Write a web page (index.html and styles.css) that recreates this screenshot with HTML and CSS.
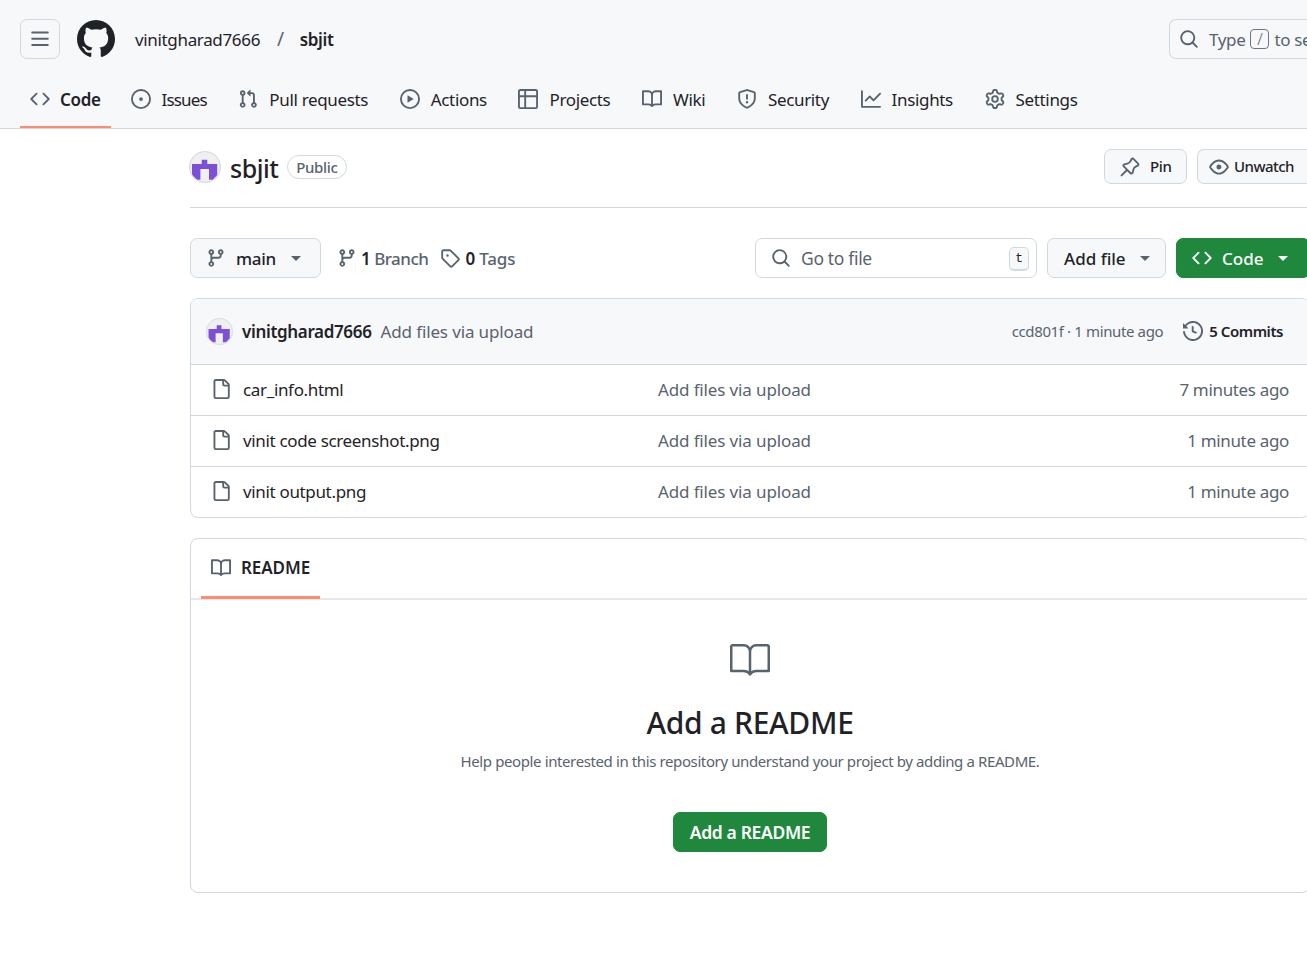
FILE: index.html
```html
<!DOCTYPE html>
<html lang="en">
<head>
    <meta charset="UTF-8">
    <meta name="viewport" content="width=device-width, initial-scale=1.0">
    <title>vinitgharad7666/sbjit</title>
    <link rel="stylesheet" href="styles.css">
</head>
<body>
    <!-- Iconos reutilizados -->
    <svg class="sprites" xmlns="http://www.w3.org/2000/svg">
        <symbol id="i-bars" viewBox="0 0 16 16"><path d="M1 2.75A.75.75 0 0 1 1.75 2h12.5a.75.75 0 0 1 0 1.5H1.75A.75.75 0 0 1 1 2.75Zm0 5A.75.75 0 0 1 1.75 7h12.5a.75.75 0 0 1 0 1.5H1.75A.75.75 0 0 1 1 7.75ZM1.75 12h12.5a.75.75 0 0 1 0 1.5H1.75a.75.75 0 0 1 0-1.5Z"/></symbol>
        <symbol id="i-mark" viewBox="0 0 16 16"><path d="M8 0c4.42 0 8 3.58 8 8a8.013 8.013 0 0 1-5.45 7.59c-.4.08-.55-.17-.55-.38 0-.27.01-1.13.01-2.2 0-.75-.25-1.23-.54-1.48 1.78-.2 3.65-.88 3.65-3.95 0-.88-.31-1.59-.82-2.15.08-.2.36-1.02-.08-2.12 0 0-.67-.22-2.2.82-.64-.18-1.32-.27-2-.27-.68 0-1.36.09-2 .27-1.53-1.03-2.2-.82-2.2-.82-.44 1.1-.16 1.92-.08 2.12-.51.56-.82 1.28-.82 2.15 0 3.06 1.86 3.75 3.64 3.95-.23.2-.44.55-.51 1.07-.46.21-1.61.55-2.33-.66-.15-.24-.6-.83-1.23-.82-.67.01-.27.38.01.53.34.19.73.9.82 1.13.16.45.68 1.31 2.69.94 0 .67.01 1.3.01 1.49 0 .21-.15.45-.55.38A7.995 7.995 0 0 1 0 8c0-4.42 3.58-8 8-8Z"/></symbol>
        <symbol id="i-code" viewBox="0 0 16 16"><path d="m11.28 3.22 4.25 4.25a.75.75 0 0 1 0 1.06l-4.25 4.25a.749.749 0 0 1-1.275-.326.749.749 0 0 1 .215-.734L13.94 8l-3.72-3.72a.749.749 0 0 1 .326-1.275.749.749 0 0 1 .734.215Zm-6.56 0a.751.751 0 0 1 1.042.018.751.751 0 0 1 .018 1.042L2.06 8l3.72 3.72a.749.749 0 0 1-.326 1.275.749.749 0 0 1-.734-.215L.47 8.53a.75.75 0 0 1 0-1.06Z"/></symbol>
        <symbol id="i-issue" viewBox="0 0 16 16"><path d="M8 9.5a1.5 1.5 0 1 0 0-3 1.5 1.5 0 0 0 0 3Z"/><path d="M8 0a8 8 0 1 1 0 16A8 8 0 0 1 8 0ZM1.5 8a6.5 6.5 0 1 0 13 0 6.5 6.5 0 0 0-13 0Z"/></symbol>
        <symbol id="i-pull" viewBox="0 0 16 16"><path d="M1.5 3.25a2.25 2.25 0 1 1 3 2.122v5.256a2.251 2.251 0 1 1-1.5 0V5.372A2.25 2.25 0 0 1 1.5 3.25Zm5.677-.177L9.573.677A.25.25 0 0 1 10 .854V2.5h1A2.5 2.5 0 0 1 13.5 5v5.628a2.251 2.251 0 1 1-1.5 0V5a1 1 0 0 0-1-1h-1v1.646a.25.25 0 0 1-.427.177L7.177 3.427a.25.25 0 0 1 0-.354ZM3.75 2.5a.75.75 0 1 0 0 1.5.75.75 0 0 0 0-1.5Zm0 9.5a.75.75 0 1 0 0 1.5.75.75 0 0 0 0-1.5Zm8.25.75a.75.75 0 1 0 1.5 0 .75.75 0 0 0-1.5 0Z"/></symbol>
        <symbol id="i-play" viewBox="0 0 16 16"><path d="M8 0a8 8 0 1 1 0 16A8 8 0 0 1 8 0ZM1.5 8a6.5 6.5 0 1 0 13 0 6.5 6.5 0 0 0-13 0Zm4.879-2.773 4.264 2.559a.25.25 0 0 1 0 .428l-4.264 2.559A.25.25 0 0 1 6 10.559V5.442a.25.25 0 0 1 .379-.215Z"/></symbol>
        <symbol id="i-table" viewBox="0 0 16 16"><path d="M0 1.75C0 .784.784 0 1.75 0h12.5C15.216 0 16 .784 16 1.75v12.5A1.75 1.75 0 0 1 14.25 16H1.75A1.75 1.75 0 0 1 0 14.25ZM6.5 6.5v8h7.75a.25.25 0 0 0 .25-.25V6.5Zm8-1.5V1.75a.25.25 0 0 0-.25-.25H6.5V5Zm-13 1.5v7.75c0 .138.112.25.25.25H5v-8ZM5 5V1.5H1.75a.25.25 0 0 0-.25.25V5Z"/></symbol>
        <symbol id="i-book" viewBox="0 0 16 16"><path d="M0 1.75A.75.75 0 0 1 .75 1h4.253c1.227 0 2.317.59 3 1.501A3.743 3.743 0 0 1 11.006 1h4.245a.75.75 0 0 1 .75.75v10.5a.75.75 0 0 1-.75.75h-4.507a2.25 2.25 0 0 0-1.591.659l-.622.621a.75.75 0 0 1-1.06 0l-.622-.621A2.25 2.25 0 0 0 5.258 13H.75a.75.75 0 0 1-.75-.75Zm7.251 10.324.004-5.073-.002-2.253A2.25 2.25 0 0 0 5.003 2.5H1.5v9h3.757a3.75 3.75 0 0 1 1.994.574ZM8.755 4.75l-.004 7.322a3.752 3.752 0 0 1 1.992-.572H14.5v-9h-3.495a2.25 2.25 0 0 0-2.25 2.25Z"/></symbol>
        <symbol id="i-book-big" viewBox="0 0 24 24"><path fill="none" stroke="#59636e" stroke-width="1.5" stroke-linejoin="round" d="M.75 3.75h7.5A3.75 3.75 0 0 1 12 7.5v13M23.25 3.75h-7.5A3.75 3.75 0 0 0 12 7.5M.75 3.75v15.5h7.5c1.5 0 3 .7 3.75 2 .75-1.3 2.25-2 3.75-2h7.5V3.75"/></symbol>
        <symbol id="i-shield" viewBox="0 0 16 16"><path d="M7.467.133a1.748 1.748 0 0 1 1.066 0l5.25 1.68A1.75 1.75 0 0 1 15 3.48V7c0 1.566-.32 3.182-1.303 4.682-.983 1.498-2.585 2.813-5.032 3.855a1.697 1.697 0 0 1-1.33 0c-2.447-1.042-4.049-2.357-5.032-3.855C1.32 10.182 1 8.566 1 7V3.48a1.75 1.75 0 0 1 1.217-1.667Zm.61 1.429a.25.25 0 0 0-.153 0l-5.25 1.68a.25.25 0 0 0-.174.238V7c0 1.358.275 2.666 1.057 3.86.784 1.194 2.121 2.34 4.366 3.297a.196.196 0 0 0 .154 0c2.245-.956 3.582-2.104 4.366-3.298C13.225 9.666 13.5 8.36 13.5 7V3.48a.251.251 0 0 0-.174-.237l-5.25-1.68ZM8.75 4.75v3a.75.75 0 0 1-1.5 0v-3a.75.75 0 0 1 1.5 0ZM9 10.5a1 1 0 1 1-2 0 1 1 0 0 1 2 0Z"/></symbol>
        <symbol id="i-graph" viewBox="0 0 16 16"><path d="M1.5 1.75V13.5h13.75a.75.75 0 0 1 0 1.5H.75a.75.75 0 0 1-.75-.75V1.75a.75.75 0 0 1 1.5 0Zm14.28 2.53-5.25 5.25a.75.75 0 0 1-1.06 0L7 7.06 4.28 9.78a.751.751 0 0 1-1.042-.018.751.751 0 0 1-.018-1.042l3.25-3.25a.75.75 0 0 1 1.06 0L10 7.94l4.72-4.72a.751.751 0 0 1 1.042.018.751.751 0 0 1 .018 1.042Z"/></symbol>
        <symbol id="i-gear" viewBox="0 0 16 16"><path d="M8 0a8.2 8.2 0 0 1 .701.031C9.444.095 9.99.645 10.16 1.29l.288 1.107c.018.066.079.158.212.224.231.114.454.243.668.386.123.082.233.09.299.071l1.103-.303c.644-.176 1.392.021 1.82.63.27.385.506.792.704 1.218.315.675.111 1.422-.364 1.891l-.814.806c-.049.048-.098.147-.088.294.016.257.016.515 0 .772-.01.147.038.246.088.294l.814.806c.475.469.679 1.216.364 1.891a7.977 7.977 0 0 1-.704 1.217c-.428.61-1.176.807-1.82.63l-1.102-.302c-.067-.019-.177-.011-.3.071a5.909 5.909 0 0 1-.668.386c-.133.066-.194.158-.211.224l-.29 1.106c-.168.646-.715 1.196-1.458 1.26a8.006 8.006 0 0 1-1.402 0c-.743-.064-1.289-.614-1.458-1.26l-.289-1.106c-.018-.066-.079-.158-.212-.224a5.738 5.738 0 0 1-.668-.386c-.123-.082-.233-.09-.299-.071l-1.103.303c-.644.176-1.392-.021-1.82-.63a8.12 8.12 0 0 1-.704-1.218c-.315-.675-.111-1.422.363-1.891l.815-.806c.05-.048.098-.147.088-.294a6.214 6.214 0 0 1 0-.772c.01-.147-.038-.246-.088-.294l-.815-.806C.635 6.045.431 5.298.746 4.623a7.92 7.92 0 0 1 .704-1.217c.428-.61 1.176-.807 1.82-.63l1.102.302c.067.019.177.011.3-.071.214-.143.437-.272.668-.386.133-.066.194-.158.211-.224l.29-1.106C6.009.645 6.556.095 7.299.03 7.53.01 7.764 0 8 0Zm-.571 1.525c-.036.003-.108.036-.137.146l-.289 1.105c-.147.561-.549.967-.998 1.189-.173.086-.34.183-.5.29-.417.278-.97.423-1.529.27l-1.103-.303c-.109-.03-.175.016-.195.045-.22.312-.412.644-.573.99-.014.031-.021.11.059.19l.815.806c.411.406.562.957.53 1.456a4.709 4.709 0 0 0 0 .582c.032.499-.119 1.05-.53 1.456l-.815.806c-.081.08-.073.159-.059.19.162.346.353.677.573.989.02.03.085.076.195.046l1.102-.303c.56-.153 1.113-.008 1.53.27.161.107.328.204.501.29.447.222.85.629.997 1.189l.289 1.105c.029.109.101.143.137.146a6.6 6.6 0 0 0 1.142 0c.036-.003.108-.036.137-.146l.289-1.105c.147-.561.549-.967.998-1.189.173-.086.34-.183.5-.29.417-.278.97-.423 1.529-.27l1.103.303c.109.029.175-.016.195-.045.22-.313.411-.644.573-.99.014-.031.021-.11-.059-.19l-.815-.806c-.411-.406-.562-.957-.53-1.456a4.709 4.709 0 0 0 0-.582c-.032-.499.119-1.05.53-1.456l.815-.806c.081-.08.073-.159.059-.19a6.464 6.464 0 0 0-.573-.989c-.02-.03-.085-.076-.195-.046l-1.102.303c-.56.153-1.113.008-1.53-.27a4.44 4.44 0 0 0-.501-.29c-.447-.222-.85-.629-.997-1.189l-.289-1.105c-.029-.11-.101-.143-.137-.146a6.6 6.6 0 0 0-1.142 0ZM11 8a3 3 0 1 1-6 0 3 3 0 0 1 6 0ZM9.5 8a1.5 1.5 0 1 0-3.001.001A1.5 1.5 0 0 0 9.5 8Z"/></symbol>
        <symbol id="i-search" viewBox="0 0 16 16"><path d="M10.68 11.74a6 6 0 0 1-7.922-8.982 6 6 0 0 1 8.982 7.922l3.04 3.04a.749.749 0 0 1-.326 1.275.749.749 0 0 1-.734-.215ZM11.5 7a4.499 4.499 0 1 0-8.997 0A4.499 4.499 0 0 0 11.5 7Z"/></symbol>
        <symbol id="i-pin" viewBox="0 0 16 16"><path d="m11.294.984 3.722 3.722a1.75 1.75 0 0 1-.504 2.826l-1.327.613a3.089 3.089 0 0 0-1.707 2.084l-.584 2.454c-.317 1.332-1.972 1.8-2.94.832L5.75 11.311 1.78 15.28a.749.749 0 1 1-1.06-1.06l3.969-3.97-2.204-2.204c-.968-.968-.5-2.623.832-2.94l2.454-.584a3.08 3.08 0 0 0 2.084-1.707l.613-1.327a1.75 1.75 0 0 1 2.826-.504ZM6.283 9.723l2.732 2.731a.25.25 0 0 0 .42-.119l.584-2.454a4.586 4.586 0 0 1 2.537-3.098l1.328-.613a.25.25 0 0 0 .072-.404l-3.722-3.722a.25.25 0 0 0-.404.072l-.613 1.328a4.584 4.584 0 0 1-3.098 2.537l-2.454.584a.25.25 0 0 0-.119.42l2.731 2.732Z"/></symbol>
        <symbol id="i-eye" viewBox="0 0 16 16"><path d="M8 2c1.981 0 3.671.992 4.933 2.078 1.27 1.091 2.187 2.345 2.637 3.023a1.62 1.62 0 0 1 0 1.798c-.45.678-1.367 1.932-2.637 3.023C11.67 13.008 9.981 14 8 14c-1.981 0-3.671-.992-4.933-2.078C1.797 10.83.88 9.576.43 8.898a1.62 1.62 0 0 1 0-1.798c.45-.677 1.367-1.931 2.637-3.022C4.33 2.992 6.019 2 8 2ZM1.679 7.932a.12.12 0 0 0 0 .136c.411.622 1.241 1.75 2.366 2.717C5.176 11.758 6.527 12.5 8 12.5c1.473 0 2.825-.742 3.955-1.715 1.124-.967 1.954-2.096 2.366-2.717a.12.12 0 0 0 0-.136c-.412-.621-1.242-1.75-2.366-2.717C10.824 4.242 9.473 3.5 8 3.5c-1.473 0-2.825.742-3.955 1.715-1.124.967-1.954 2.096-2.366 2.717ZM8 10a2 2 0 1 1-.001-3.999A2 2 0 0 1 8 10Z"/></symbol>
        <symbol id="i-branch" viewBox="0 0 16 16"><path d="M9.5 3.25a2.25 2.25 0 1 1 3 2.122V6A2.5 2.5 0 0 1 10 8.5H6a1 1 0 0 0-1 1v1.128a2.251 2.251 0 1 1-1.5 0V5.372a2.25 2.25 0 1 1 1.5 0v1.836A2.493 2.493 0 0 1 6 7h4a1 1 0 0 0 1-1v-.628A2.25 2.25 0 0 1 9.5 3.25Zm-6 0a.75.75 0 1 0 1.5 0 .75.75 0 0 0-1.5 0Zm8.25-.75a.75.75 0 1 0 0 1.5.75.75 0 0 0 0-1.5ZM4.25 12a.75.75 0 1 0 0 1.5.75.75 0 0 0 0-1.5Z"/></symbol>
        <symbol id="i-tag" viewBox="0 0 16 16"><path d="M1 7.775V2.75C1 1.784 1.784 1 2.75 1h5.025c.464 0 .91.184 1.238.513l6.25 6.25a1.75 1.75 0 0 1 0 2.474l-5.026 5.026a1.75 1.75 0 0 1-2.474 0l-6.25-6.25A1.752 1.752 0 0 1 1 7.775Zm1.5 0c0 .066.026.13.073.177l6.25 6.25a.25.25 0 0 0 .354 0l5.025-5.025a.25.25 0 0 0 0-.354l-6.25-6.25a.25.25 0 0 0-.177-.073H2.75a.25.25 0 0 0-.25.25ZM6 5a1 1 0 1 1 0 2 1 1 0 0 1 0-2Z"/></symbol>
        <symbol id="i-history" viewBox="0 0 16 16"><path d="m.427 1.927 1.215 1.215a8.002 8.002 0 1 1-1.6 5.685.75.75 0 1 1 1.493-.154 6.5 6.5 0 1 0 1.18-4.458l1.358 1.358A.25.25 0 0 1 3.896 6H.25A.25.25 0 0 1 0 5.75V2.104a.25.25 0 0 1 .427-.177ZM7.75 4a.75.75 0 0 1 .75.75v2.992l2.028.812a.75.75 0 0 1-.557 1.392l-2.5-1A.751.751 0 0 1 7 8.25v-3.5A.75.75 0 0 1 7.75 4Z"/></symbol>
        <symbol id="i-file" viewBox="0 0 16 16"><path d="M2 1.75C2 .784 2.784 0 3.75 0h6.586c.464 0 .909.184 1.237.513l2.914 2.914c.329.328.513.773.513 1.237v9.586A1.75 1.75 0 0 1 13.25 16h-9.5A1.75 1.75 0 0 1 2 14.25Zm1.75-.25a.25.25 0 0 0-.25.25v12.5c0 .138.112.25.25.25h9.5a.25.25 0 0 0 .25-.25V6h-2.75A1.75 1.75 0 0 1 9 4.25V1.5Zm6.75.062V4.25c0 .138.112.25.25.25h2.688l-.011-.013-2.914-2.914-.013-.011Z"/></symbol>
        <symbol id="i-avatar" viewBox="0 0 32 32"><circle cx="16" cy="16" r="16" fill="#f0f0f0"/><path fill="#7c50d6" d="M12.7 8.7h5.6V13h9.9v11l-4.4 4.7H20V18h-8.6v10.7H7.800L3 24V13h9.700Z"/><circle cx="16" cy="16" r="15.500" fill="none" stroke="#d1d9e0"/></symbol>
    </svg>

    <header class="top">
        <div class="top-row">
            <button class="menu-btn"><svg class="ic"><use href="#i-bars"/></svg></button>
            <svg class="logo"><use href="#i-mark"/></svg>
            <a class="owner">vinitgharad7666</a>
            <span class="slash">/</span>
            <a class="repo-link">sbjit</a>
            <div class="search">
                <svg class="ic"><use href="#i-search"/></svg>
                <span>Type</span><kbd class="slash-key">/</kbd><span>to search</span>
            </div>
        </div>
        <nav class="tabs">
            <a class="tab selected"><svg class="ic"><use href="#i-code"/></svg>Code</a>
            <a class="tab tab-issues"><svg class="ic"><use href="#i-issue"/></svg>Issues</a>
            <a class="tab"><svg class="ic"><use href="#i-pull"/></svg>Pull requests</a>
            <a class="tab"><svg class="ic"><use href="#i-play"/></svg>Actions</a>
            <a class="tab"><svg class="ic"><use href="#i-table"/></svg>Projects</a>
            <a class="tab"><svg class="ic"><use href="#i-book"/></svg>Wiki</a>
            <a class="tab"><svg class="ic"><use href="#i-shield"/></svg>Security</a>
            <a class="tab"><svg class="ic"><use href="#i-graph"/></svg>Insights</a>
            <a class="tab"><svg class="ic"><use href="#i-gear"/></svg>Settings</a>
        </nav>
    </header>

    <main class="page">
        <div class="repo-head">
            <svg class="avatar"><use href="#i-avatar"/></svg>
            <h1 class="repo-name">sbjit</h1>
            <span class="badge">Public</span>
            <div class="head-actions">
                <button class="small-btn pin"><svg class="ic"><use href="#i-pin"/></svg>Pin</button>
                <button class="small-btn watch"><svg class="ic"><use href="#i-eye"/></svg>Unwatch<span class="count"></span></button>
            </div>
        </div>

        <div class="toolbar">
            <button class="btn branch-btn"><svg class="ic"><use href="#i-branch"/></svg><span>main</span><i class="caret"></i></button>
            <a class="meta first"><svg class="ic"><use href="#i-branch"/></svg><span><b>1</b> Branch</span></a>
            <a class="meta tags"><svg class="ic"><use href="#i-tag"/></svg><span><b>0</b> Tags</span></a>
            <div class="goto">
                <svg class="ic"><use href="#i-search"/></svg>
                <span>Go to file</span>
                <kbd class="t-key">t</kbd>
            </div>
            <button class="btn add-file">Add file<i class="caret"></i></button>
            <button class="btn code-btn"><svg class="ic"><use href="#i-code"/></svg>Code<i class="caret"></i></button>
        </div>

        <section class="files">
            <div class="commit-row">
                <svg class="avatar small"><use href="#i-avatar"/></svg>
                <a class="author">vinitgharad7666</a>
                <span class="commit-msg">Add files via upload</span>
                <span class="commit-hash">ccd801f · 1 minute ago</span>
                <a class="commits"><svg class="ic"><use href="#i-history"/></svg>5 Commits</a>
            </div>
            <div class="file-row">
                <svg class="ic"><use href="#i-file"/></svg>
                <a class="file-name">car_info.html</a>
                <span class="file-msg">Add files via upload</span>
                <span class="file-time">7 minutes ago</span>
            </div>
            <div class="file-row">
                <svg class="ic"><use href="#i-file"/></svg>
                <a class="file-name">vinit code screenshot.png</a>
                <span class="file-msg">Add files via upload</span>
                <span class="file-time">1 minute ago</span>
            </div>
            <div class="file-row">
                <svg class="ic"><use href="#i-file"/></svg>
                <a class="file-name">vinit output.png</a>
                <span class="file-msg">Add files via upload</span>
                <span class="file-time">1 minute ago</span>
            </div>
        </section>

        <section class="readme">
            <div class="readme-tabs">
                <a class="readme-tab"><svg class="ic"><use href="#i-book"/></svg>README</a>
            </div>
            <div class="readme-body">
                <svg class="big-book"><use href="#i-book-big"/></svg>
                <h2>Add a README</h2>
                <p>Help people interested in this repository understand your project by adding a README.</p>
                <button class="btn add-readme">Add a README</button>
            </div>
        </section>
    </main>
</body>
</html>
```

FILE: styles.css
```css
* {
    box-sizing: border-box;
}
html, body {
    height: 968px;
    overflow: hidden;
}
body {
    margin: 0;
    font-family: "Noto Sans", "Open Sans", sans-serif;
    font-size: 17px;
    letter-spacing: -0.02em;
    color: #1f2328;
    background-color: #fff;
}
.sprites {
    display: none;
}
.ic {
    width: 20px;
    height: 20px;
    fill: #59636e;
    flex: none;
}
button {
    font: inherit;
    letter-spacing: inherit;
    color: inherit;
}

/* Cabecera */
.top {
    background-color: #f6f8fa;
    border-bottom: 1px solid #d1d9e0;
    height: 129px;
    padding-top: 19px;
}
.top-row {
    display: flex;
    align-items: center;
    height: 40px;
    padding-left: 20px;
    white-space: nowrap;
}
.menu-btn {
    width: 40px;
    height: 40px;
    padding: 0;
    display: flex;
    align-items: center;
    justify-content: center;
    background: transparent;
    border: 1px solid #d1d9e0;
    border-radius: 7px;
}
.logo {
    width: 38px;
    height: 38px;
    margin-left: 17px;
    fill: #1f2328;
}
.owner {
    margin-left: 20px;
}
.slash {
    margin-left: 17px;
    color: #59636e;
    font-size: 19px;
}
.repo-link {
    margin-left: 16px;
    font-weight: 600;
}
.search {
    margin-left: auto;
    width: 138px;
    height: 40px;
    display: flex;
    align-items: center;
    flex: none;
    padding-left: 9px;
    color: #59636e;
    background: #f6f8fa;
    border: 1px solid #d1d9e0;
    border-right: 0;
    border-radius: 7px 0 0 7px;
    overflow: hidden;
}
.search span:first-of-type {
    margin-left: 10px;
}
.slash-key {
    width: 19px;
    height: 20px;
    margin: 0 5px;
    flex: none;
    display: flex;
    align-items: center;
    justify-content: center;
    font-family: "Noto Sans", sans-serif;
    font-size: 16px;
    font-weight: 300;
    border: 1px solid #6e7781;
    border-radius: 4px;
}
.tabs {
    display: flex;
    gap: 11.6px;
    padding-left: 20px;
    margin-top: 20px;
    height: 49px;
}
.tab {
    display: flex;
    align-items: center;
    gap: 11px;
    height: 49px;
    padding: 0 10px 9px;
    white-space: nowrap;
}
.tab.selected {
    gap: 10px;
    margin-right: -1.6px;
    font-weight: 600;
    border-bottom: 2px solid #fd8c73;
    padding: 0 10px 7px;
}
.tab-issues {
    letter-spacing: -0.05em;
}

/* Contenido */
.page {
    width: 1120px;
    margin-left: 190px;
}
.repo-head {
    display: flex;
    align-items: center;
    height: 79px;
    padding-top: 20px;
    padding-bottom: 23px;
    border-bottom: 1px solid #d1d9e0;
}
.avatar {
    width: 32px;
    height: 32px;
    margin-left: -1px;
    flex: none;
}
.repo-name {
    margin: 2px 0 0 9px;
    font-size: 25px;
    font-weight: 500;
    letter-spacing: -0.02em;
}
.badge {
    margin-left: 9px;
    height: 24px;
    padding: 0 8px;
    display: flex;
    align-items: center;
    font-size: 15px;
    font-weight: 500;
    color: #59636e;
    border: 1px solid #d1d9e0;
    border-radius: 12px;
}
.head-actions {
    margin-left: auto;
    display: flex;
    gap: 10px;
}
.small-btn {
    height: 35px;
    display: flex;
    align-items: center;
    font-size: 15px;
    font-weight: 500;
    padding-bottom: 2px;
    background: #f6f8fa;
    border: 1px solid #d1d9e0;
    border-radius: 7px;
}
.small-btn .ic {
    margin-top: 2px;
}
.pin {
    width: 83px;
    padding-left: 15px;
    padding-right: 0;
    gap: 10px;
}
.watch {
    width: 113px;
    padding-left: 11px;
    padding-right: 0;
    gap: 5px;
    letter-spacing: -0.035em;
    overflow: hidden;
    border-right: 0;
    border-radius: 7px 0 0 7px;
}
.count {
    margin-top: 2px;
    margin-left: 10px;
    width: 20px;
    height: 22px;
    flex: none;
    background: #e8ebef;
    border-radius: 11px;
}
.toolbar {
    display: flex;
    align-items: center;
    margin-top: 30px;
}
.btn {
    height: 40px;
    display: flex;
    align-items: center;
    font-weight: 500;
    background: #f6f8fa;
    border: 1px solid #d1d9e0;
    border-radius: 7px;
    white-space: nowrap;
}
.caret {
    width: 0;
    height: 0;
    border-left: 5px solid transparent;
    border-right: 5px solid transparent;
    border-top: 5px solid #59636e;
}
.branch-btn {
    width: 131px;
    padding: 0 0 0 15px;
}
.branch-btn span {
    margin-left: 10px;
    font-weight: 500;
}
.branch-btn .caret {
    margin-left: 15px;
}
.meta {
    display: flex;
    align-items: center;
    gap: 4px;
    margin-left: 12px;
    color: #59636e;
    white-space: nowrap;
    font-weight: 500;
    letter-spacing: -0.03em;
}
.meta.first {
    margin-left: 16px;
}
.meta.tags {
    gap: 5px;
    letter-spacing: -0.01em;
}
.meta b {
    color: #1f2328;
    font-weight: 600;
}
.goto {
    margin-left: auto;
    width: 282px;
    height: 40px;
    display: flex;
    align-items: center;
    padding: 0 7px 0 15px;
    color: #59636e;
    border: 1px solid #d1d9e0;
    border-radius: 7px;
}
.goto span {
    margin-left: 10px;
    font-size: 17.5px;
}
.t-key {
    margin-left: auto;
    margin-top: 2px;
    width: 20px;
    height: 24px;
    display: flex;
    align-items: center;
    justify-content: center;
    font-family: "Liberation Mono", monospace;
    font-size: 13px;
    color: #1f2328;
    background: #f6f8fa;
    border: 1px solid #d1d9e0;
    border-bottom-width: 2px;
    border-radius: 5px;
}
.add-file {
    width: 119px;
    margin-left: 10px;
    padding: 0 0 0 16px;
    letter-spacing: 0;
}
.add-file .caret {
    margin-left: 14px;
}
.code-btn {
    width: 134px;
    margin-left: 10px;
    padding: 0 0 0 15px;
    gap: 10px;
    letter-spacing: 0;
    color: #fff;
    background: #1f883d;
    border-color: #1f883d;
}
.code-btn .ic {
    fill: #fff;
}
.code-btn .caret {
    margin-left: 5px;
    border-top-color: #fff;
}

/* Tabla de archivos */
.files {
    margin-top: 20px;
    border: 1px solid #d1d9e0;
    border-radius: 8px;
    overflow: hidden;
}
.commit-row {
    height: 65px;
    display: flex;
    align-items: center;
    padding: 0 26px 1px 15px;
    background: #f6f8fa;
    white-space: nowrap;
}
.avatar.small {
    width: 27px;
    height: 27px;
    margin-left: 0;
    margin-top: 1px;
}
.author {
    margin-left: 9px;
    font-weight: 600;
}
.commit-msg {
    margin-left: 9px;
    color: #59636e;
    letter-spacing: -0.008em;
}
.commit-hash {
    margin-left: auto;
    font-size: 15px;
    letter-spacing: -0.025em;
    color: #59636e;
}
.commits {
    display: flex;
    align-items: center;
    gap: 6px;
    margin-left: 20px;
    font-size: 15px;
    font-weight: 600;
    letter-spacing: -0.03em;
}
.file-row {
    height: 51px;
    display: flex;
    align-items: center;
    padding: 0 20px 2px 20px;
    border-top: 1px solid #d1d9e0;
    white-space: nowrap;
}
.file-name {
    margin-left: 12px;
    width: 415px;
}
.file-msg {
    color: #59636e;
    letter-spacing: -0.008em;
}
.file-time {
    margin-left: auto;
    color: #59636e;
}

/* README */
.readme {
    height: 355px;
    margin-top: 20px;
    border: 1px solid #d1d9e0;
    border-radius: 8px;
}
.readme-tabs {
    height: 61px;
    padding-left: 10px;
    border-bottom: 2px solid #e4e8ec;
}
.readme-tab {
    display: inline-flex;
    align-items: center;
    gap: 10px;
    height: 60px;
    padding: 0 10px 0 10px;
    font-weight: 600;
    letter-spacing: -0.005em;
    border-bottom: 3px solid #fd8c73;
}
.readme-body {
    display: flex;
    flex-direction: column;
    align-items: center;
    padding-top: 39px;
}
.big-book {
    width: 40px;
    height: 40px;
}
.readme-body h2 {
    margin: 20px 0 0;
    font-size: 30px;
    line-height: 48px;
    font-weight: 500;
}
.readme-body p {
    margin: 4px 0 0;
    font-size: 15px;
    line-height: 20px;
    letter-spacing: -0.026em;
    color: #59636e;
}
.add-readme {
    margin-top: 41px;
    padding: 0 15.5px;
    font-size: 17.5px;
    color: #fff;
    background: #1f883d;
    border-color: #1f883d;
    font-weight: 600;
}
```
